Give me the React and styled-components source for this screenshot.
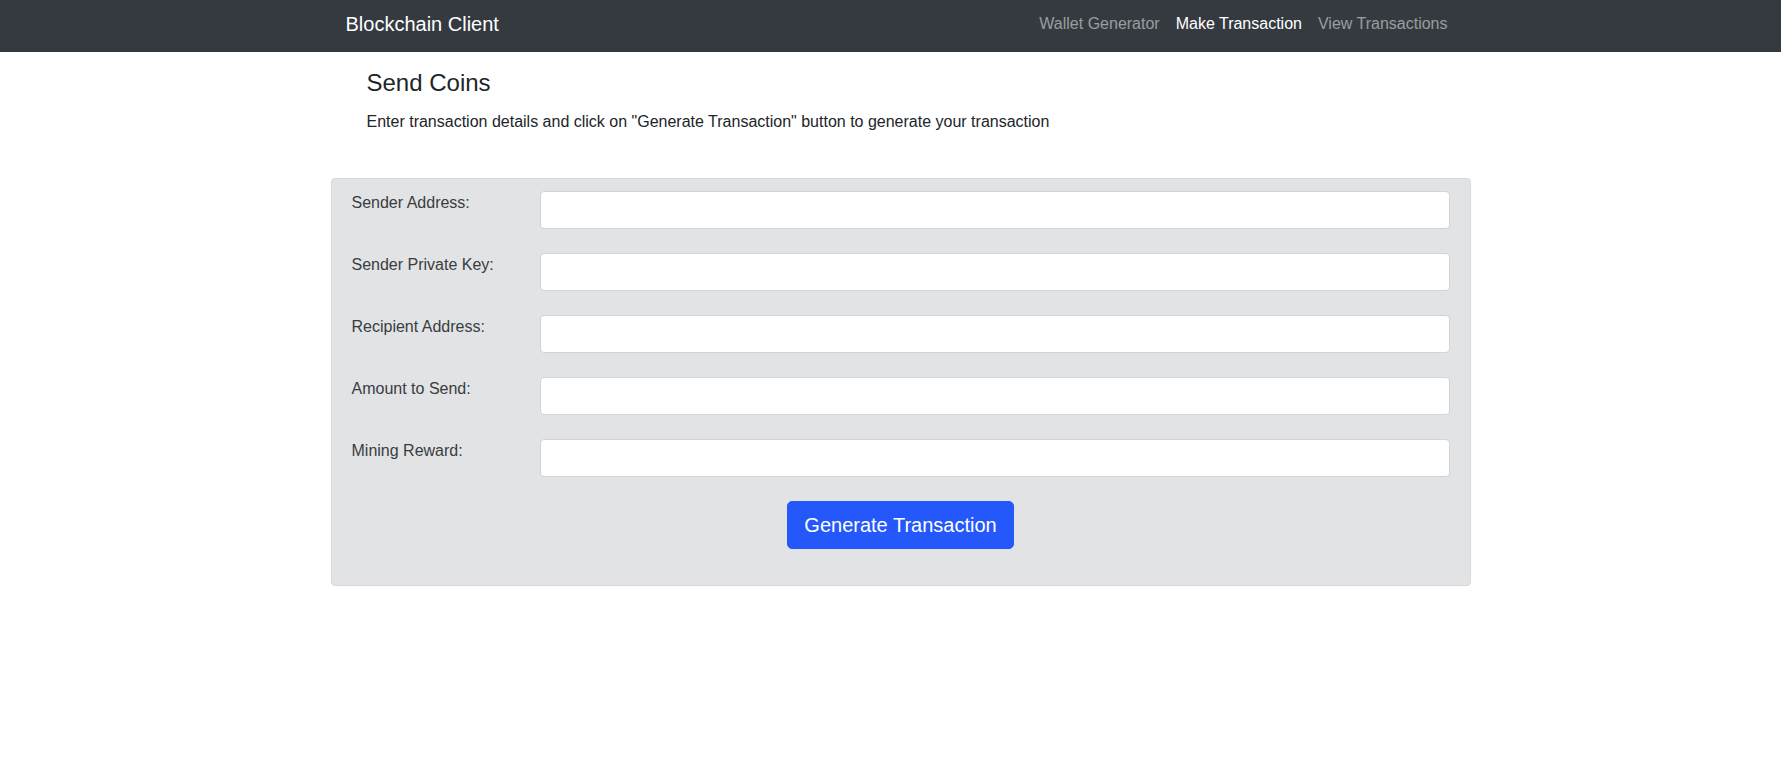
import React from "react";
import styled, { createGlobalStyle } from "styled-components";

const GlobalStyle = createGlobalStyle`
  * {
    box-sizing: border-box;
  }
  body {
    margin: 0;
    background: #fff;
    color: #212529;
    font-family: "Liberation Sans", Arial, sans-serif;
    font-size: 16px;
    line-height: 1.5;
  }
`;

const links = [
  { label: "Wallet Generator", active: false },
  { label: "Make Transaction", active: true },
  { label: "View Transactions", active: false },
];

const fields = [
  "Sender Address:",
  "Sender Private Key:",
  "Recipient Address:",
  "Amount to Send:",
  "Mining Reward:",
];

const App = () => {
  return (
    <>
      <GlobalStyle />
      <Navbar>
        <Shift>
          <NavContainer>
            <Brand href="#">Blockchain Client</Brand>
            <NavList>
              {links.map(el => (
                <NavLink key={el.label} href="#" active={el.active ? 1 : 0}>
                  {el.label}
                </NavLink>
              ))}
            </NavList>
          </NavContainer>
        </Shift>
      </Navbar>
      <Shift>
        <Main>
          <Header>
            <Title>Send Coins</Title>
            <Lead>
              Enter transaction details and click on "Generate Transaction"
              button to generate your transaction
            </Lead>
          </Header>
          <Card>
            {fields.map(name => (
              <Row key={name}>
                <Label>{name}</Label>
                <Input type="text" />
              </Row>
            ))}
            <ButtonRow>
              <Button type="button">Generate Transaction</Button>
            </ButtonRow>
          </Card>
        </Main>
      </Shift>
    </>
  );
};

export default App;

const Shift = styled.div`
  padding-left: 20px;
`;

const Navbar = styled.nav`
  background: #343a40;
  height: 52px;
`;

const NavContainer = styled.div`
  max-width: 1140px;
  height: 52px;
  margin: 0 auto;
  padding: 0 15px;
  display: flex;
  align-items: center;
  justify-content: space-between;
`;

const Brand = styled.a`
  color: #fff;
  font-size: 20px;
  line-height: 30px;
  text-decoration: none;
  margin-top: -4px;
`;

const NavList = styled.div`
  display: flex;
  align-items: center;
  margin-top: -4px;
`;

const NavLink = styled.a`
  padding: 0 8px;
  font-size: 16px;
  line-height: 24px;
  text-decoration: none;
  color: ${props => (props.active ? "#fff" : "rgba(255, 255, 255, 0.5)")};
`;

const Main = styled.main`
  max-width: 1140px;
  margin: 0 auto;
`;

const Header = styled.div`
  padding: 17px 0 0 36px;
`;

const Title = styled.h4`
  margin: 0 0 12px;
  font-size: 24px;
  font-weight: 400;
  line-height: 1.2;
`;

const Lead = styled.p`
  margin: 0 0 44px;
  font-size: 16px;
  line-height: 24px;
`;

const Card = styled.div`
  background: #e2e3e5;
  border: 1px solid #d6d8db;
  border-radius: 4px;
  color: #383d41;
  padding: 12px 20px 12px;
  display: flex;
  flex-direction: column;
  gap: 24px;
`;

const Row = styled.div`
  display: grid;
  grid-template-columns: 188px 1fr;
  align-items: start;
`;

const Label = styled.label`
  font-size: 16px;
  line-height: 24px;
`;

const Input = styled.input`
  height: 38px;
  width: 100%;
  background: #fff;
  border: 1px solid #ced4da;
  border-radius: 4px;
  padding: 6px 12px;
  font: inherit;
  outline: none;
`;

const ButtonRow = styled.div`
  display: flex;
  justify-content: center;
  padding-bottom: 24px;
`;

const Button = styled.button`
  height: 48px;
  padding: 0 16px;
  background: #2458fb;
  border: 1px solid #2458fb;
  border-radius: 5px;
  color: #fff;
  font-family: "Liberation Sans", Arial, sans-serif;
  font-size: 20px;
  line-height: 30px;
  cursor: pointer;
`;
